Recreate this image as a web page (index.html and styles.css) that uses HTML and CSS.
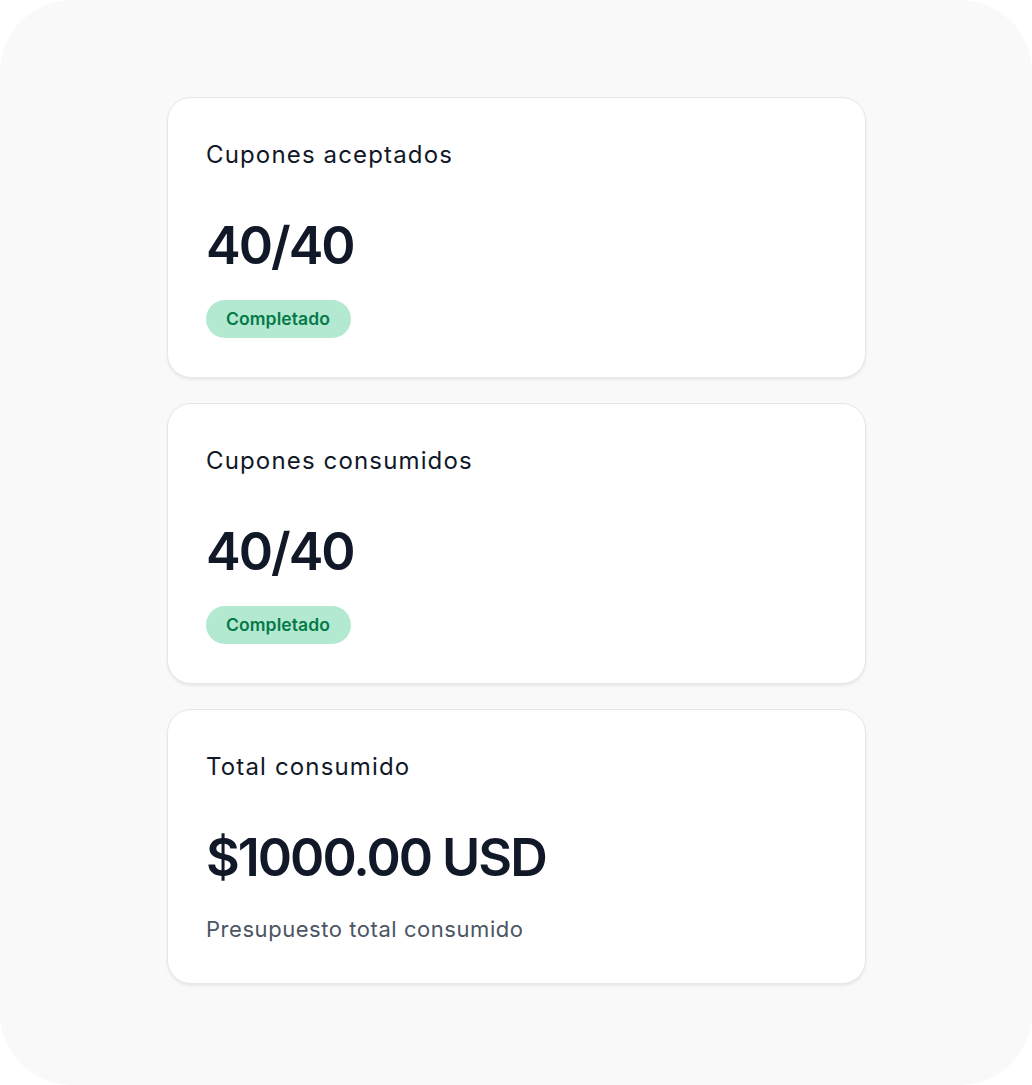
FILE: index.html
```html
<!DOCTYPE html>
<html lang="es">
<head>
<meta charset="utf-8">
<link rel="stylesheet" href="styles.css">
</head>
<body>
<div class="frame">
  <div class="stack">
    <div class="card">
      <div class="card-title">Cupones aceptados</div>
      <div class="card-value">40/40</div>
      <span class="badge">Completado</span>
    </div>
    <div class="card">
      <div class="card-title">Cupones consumidos</div>
      <div class="card-value">40/40</div>
      <span class="badge">Completado</span>
    </div>
    <div class="card">
      <div class="card-title">Total consumido</div>
      <div class="card-value">$1000.00 USD</div>
      <div class="card-note">Presupuesto total consumido</div>
    </div>
  </div>
</div>
</body>
</html>
```
FILE: styles.css
```css
html, body {
  margin: 0;
  padding: 0;
  background: #ffffff;
}
body {
  font-family: Inter, "Noto Sans", sans-serif;
  color: #111827;
}
.frame {
  width: 1032px;
  height: 1085px;
  box-sizing: border-box;
  background: #f9f9f9;
  border-radius: 72px;
  padding-top: 97px;
  padding-left: 167px;
}
.stack {
  width: 699px;
  display: flex;
  flex-direction: column;
  gap: 25px;
}
.card {
  box-sizing: border-box;
  background: #ffffff;
  border: 1px solid #e6e7ea;
  border-radius: 24px;
  box-shadow: 0 2px 3px rgba(0, 0, 0, 0.07);
  padding: 41px 38px 39px 38px;
  display: flex;
  flex-direction: column;
  align-items: flex-start;
}
.card-title {
  font-size: 24px;
  line-height: 32px;
  font-weight: 400;
  letter-spacing: 1.15px;
  color: #111827;
}
.card-value {
  font-size: 52px;
  line-height: 60px;
  font-weight: 600;
  letter-spacing: -2px;
  margin-top: 45px;
  color: #111827;
}
.badge {
  margin-top: 24px;
  height: 38px;
  line-height: 38px;
  padding: 0 21px 0 20px;
  border-radius: 19px;
  background: #b3e8d1;
  color: #047a48;
  font-size: 17.5px;
  font-weight: 600;
  letter-spacing: 0.1px;
}
.card-note {
  margin-top: 26px;
  font-size: 22px;
  line-height: 30px;
  letter-spacing: 0.55px;
  color: #4b5563;
}
```
